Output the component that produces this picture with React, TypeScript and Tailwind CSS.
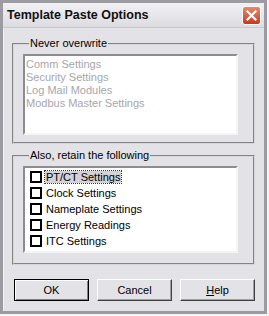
import React, { useState } from 'react';

const font = { fontFamily: '"Liberation Sans", Arial, sans-serif' };

const neverItems = ['Comm Settings', 'Security Settings', 'Log Mail Modules', 'Modbus Master Settings'];
const retainItems = ['PT/CT Settings', 'Clock Settings', 'Nameplate Settings', 'Energy Readings', 'ITC Settings'];

function Button({ children, isDefault }: { children: React.ReactNode; isDefault?: boolean }) {
  // classic raised 3D button, default one gets the black outline
  return (
    <button
      className={
        'w-[75px] h-[22px] bg-[#e3e2e6] text-[11px] text-black flex items-center justify-center ' +
        (isDefault
          ? 'border border-black shadow-[inset_1px_1px_0_#ffffff,inset_-1px_-1px_0_#808080]'
          : 'border border-t-white border-l-white border-r-[#404040] border-b-[#404040] shadow-[inset_-1px_-1px_0_#a0a0a0]')
      }
    >
      {children}
    </button>
  );
}

export default function App() {
  const [checked, setChecked] = useState<boolean[]>(retainItems.map(() => false));

  const toggle = (i: number) => setChecked(c => c.map((v, j) => (j === i ? !v : v)));

  return (
    <div style={font} className="w-[269px] h-[316px] bg-[#f4f4f4] select-none">
      <div className="w-[267px] h-[314px] flex flex-col bg-[#e3e2e6] border-[3px] border-[#9c9ba1] shadow-[inset_1px_1px_0_#f0f0f0]">
        {/* title bar */}
        <div className="h-[25px] flex items-center justify-between pl-[4px] pr-[3px] pt-[1px] bg-gradient-to-b from-[#f1f0f3] to-[#dddce1] border-b border-[#c9c8cd]">
          <span className="text-[12.5px] font-bold text-[#111]">Template Paste Options</span>
          <div className="w-[19px] h-[19px] rounded-[3px] border border-white bg-gradient-to-b from-[#e8876e] to-[#c3381d] flex items-center justify-center">
            <svg width="11" height="11" viewBox="0 0 11 11">
              <path d="M1.5 1.5 L9.5 9.5 M9.5 1.5 L1.5 9.5" stroke="#fff" strokeWidth="2.2" strokeLinecap="square" />
            </svg>
          </div>
        </div>

        <div className="flex-1 flex flex-col px-[9px] pt-[9px]">
          {/* group 1 */}
          <fieldset className="h-[107px] border-2 [border-style:groove] border-[#d6d5da] pl-[9px] pr-[15px] pt-[4px]">
            <legend className="ml-[6px] px-[1px] text-[11px] text-black leading-[13px]">Never overwrite</legend>
            <div className="h-[81px] bg-white border-2 border-t-[#8d8c91] border-l-[#8d8c91] border-r-[#f5f5f5] border-b-[#f5f5f5] pl-[1px] pt-[2px]">
              {neverItems.map(t => (
                <div key={t} className="h-[13px] leading-[13px] text-[11px] text-[#a7a6ab]">
                  {t}
                </div>
              ))}
            </div>
          </fieldset>

          {/* group 2 */}
          <fieldset className="mt-[5px] h-[116px] border-2 [border-style:groove] border-[#d6d5da] pl-[9px] pr-[15px] pt-[4px]">
            <legend className="ml-[6px] px-[1px] text-[11px] text-black leading-[13px]">Also, retain the following</legend>
            <div className="h-[87px] bg-white border-2 border-t-[#8d8c91] border-l-[#8d8c91] border-r-[#f5f5f5] border-b-[#f5f5f5] pl-[5px] pt-[1px]">
              {retainItems.map((t, i) => (
                <div key={t} className="h-[16px] flex items-center gap-[3px]" onClick={() => toggle(i)}>
                  <span className="w-[12px] h-[12px] border-2 border-black bg-white flex items-center justify-center text-[9px] leading-none">
                    {checked[i] ? '✓' : ''}
                  </span>
                  <span
                    className={
                      'text-[11px] text-black leading-[12px] px-[1px] ' +
                      (i === 0 ? 'bg-[#d3d2d7] outline-1 outline-dotted outline-[#333]' : '')
                    }
                  >
                    {t}
                  </span>
                </div>
              ))}
            </div>
          </fieldset>

          {/* buttons */}
          <div className="mt-[14px] flex gap-[8px] pl-[2px]">
            <Button isDefault>OK</Button>
            <Button>Cancel</Button>
            <Button>
              <span>
                <span className="underline">H</span>elp
              </span>
            </Button>
          </div>
        </div>
      </div>
    </div>
  );
}
